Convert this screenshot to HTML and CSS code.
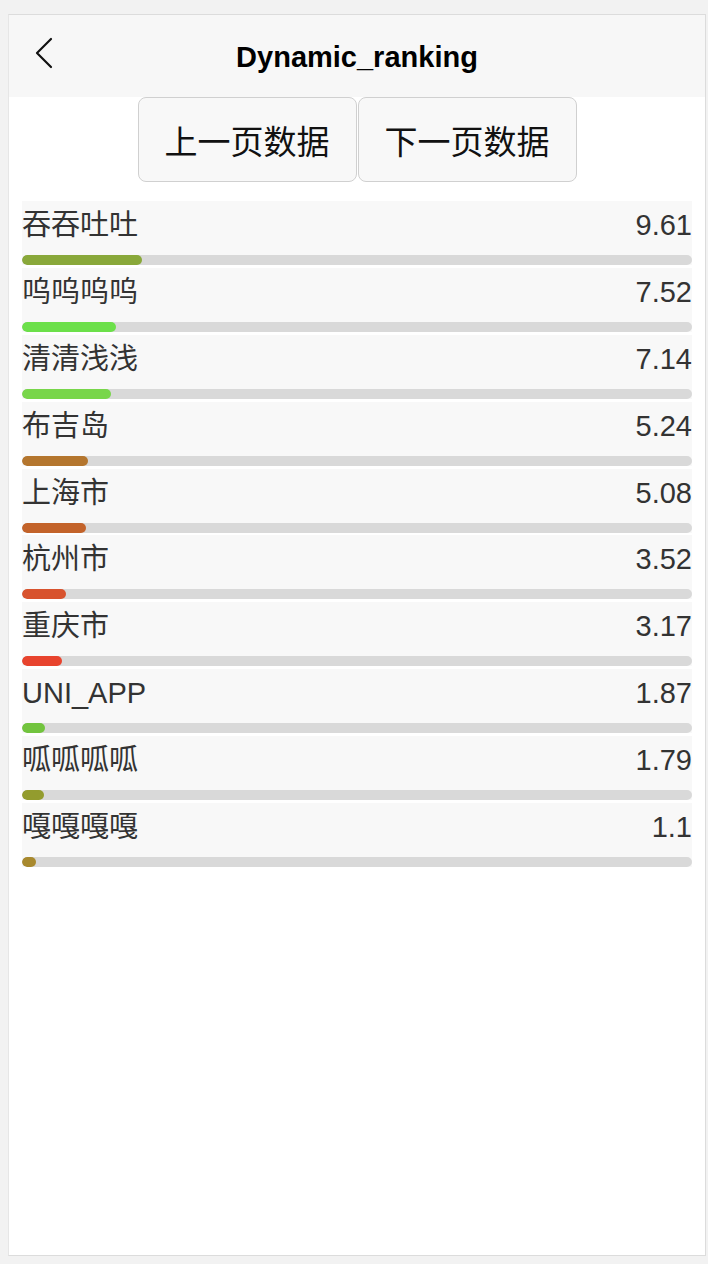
FILE: index.html
```html
<!DOCTYPE html>
<html>
<head>
    <meta charset="utf-8">
    <title>Dynamic_ranking</title>
    <link rel="stylesheet" href="styles.css">
</head>
<body>
    <div id="page">
        <div id="nav-bar">
            <div class="nav-back">
                <svg width="20" height="32" viewBox="0 0 20 32">
                    <path d="M17 2 L3 16 L17 30" fill="none" stroke="#111" stroke-width="2.2" stroke-linecap="round" stroke-linejoin="round"/>
                </svg>
            </div>
            <div class="nav-title">Dynamic_ranking</div>
            <div></div>
        </div>

        <div id="pager">
            <button class="pager-button">上一页数据</button>
            <button class="pager-button">下一页数据</button>
        </div>

        <div id="ranking-list">
            <div class="rank-item">
                <div class="rank-info"><span>吞吞吐吐</span><span>9.61</span></div>
                <div class="rank-track"><div class="rank-fill" style="width:120.1px;background:#89a83a"></div></div>
            </div>
            <div class="rank-item">
                <div class="rank-info"><span>呜呜呜呜</span><span>7.52</span></div>
                <div class="rank-track"><div class="rank-fill" style="width:94px;background:#6ce04a"></div></div>
            </div>
            <div class="rank-item">
                <div class="rank-info"><span>清清浅浅</span><span>7.14</span></div>
                <div class="rank-track"><div class="rank-fill" style="width:89.3px;background:#78d64a"></div></div>
            </div>
            <div class="rank-item">
                <div class="rank-info"><span>布吉岛</span><span>5.24</span></div>
                <div class="rank-track"><div class="rank-fill" style="width:65.5px;background:#b4762e"></div></div>
            </div>
            <div class="rank-item">
                <div class="rank-info"><span>上海市</span><span>5.08</span></div>
                <div class="rank-track"><div class="rank-fill" style="width:63.5px;background:#c3632a"></div></div>
            </div>
            <div class="rank-item">
                <div class="rank-info"><span>杭州市</span><span>3.52</span></div>
                <div class="rank-track"><div class="rank-fill" style="width:44px;background:#d8532e"></div></div>
            </div>
            <div class="rank-item">
                <div class="rank-info"><span>重庆市</span><span>3.17</span></div>
                <div class="rank-track"><div class="rank-fill" style="width:39.6px;background:#e8442e"></div></div>
            </div>
            <div class="rank-item">
                <div class="rank-info"><span>UNI_APP</span><span>1.87</span></div>
                <div class="rank-track"><div class="rank-fill" style="width:23.4px;background:#72c43e"></div></div>
            </div>
            <div class="rank-item">
                <div class="rank-info"><span>呱呱呱呱</span><span>1.79</span></div>
                <div class="rank-track"><div class="rank-fill" style="width:22.4px;background:#939c2e"></div></div>
            </div>
            <div class="rank-item">
                <div class="rank-info"><span>嘎嘎嘎嘎</span><span>1.1</span></div>
                <div class="rank-track"><div class="rank-fill" style="width:13.8px;background:#a8892e"></div></div>
            </div>
        </div>
    </div>
</body>
</html>
```

FILE: styles.css
```css
/* Ranking page */
body {
    margin: 0;
    background-color: #f2f2f2;
    font-family: 'Liberation Sans', 'Noto Sans CJK SC', sans-serif;
    color: #333333;
}

#page {
    margin: 14px 2px 0 8px;
    height: 1242px;
    box-sizing: border-box;
    border: 1px solid #dcdcdc;
    border-left-color: #e6e6e6;
    background-color: #FFFFFF;
}

/* Top navigation */
#nav-bar {
    display: grid;
    grid-template-columns: 80px 1fr 80px;
    align-items: center;
    height: 82px;
    background-color: #f7f7f7;
}

.nav-back {
    display: flex;
    align-items: center;
    padding-left: 25px;
    padding-bottom: 6px;
}

.nav-title {
    text-align: center;
    font-size: 29px;
    font-weight: bold;
    color: #000000;
    padding-top: 2px;
}

/* Prev / next buttons */
#pager {
    display: flex;
    justify-content: center;
    gap: 1px;
}

.pager-button {
    width: 219px;
    height: 85px;
    background-color: #f8f8f8;
    border: 1px solid #d0d0d0;
    border-radius: 8px;
    font-family: 'Noto Sans CJK SC', sans-serif;
    font-size: 33px;
    color: #111111;
    padding: 0;
    cursor: pointer;
}

/* Ranking rows */
#ranking-list {
    padding: 19px 13px 0 13px;
}

.rank-item {
    height: 64px;
    margin-bottom: 2.9px;
    background-color: #f8f8f8;
}

.rank-info {
    display: flex;
    justify-content: space-between;
    height: 40px;
    padding-top: 4px;
    line-height: 40px;
    font-size: 29px;
    color: #333333;
}

.rank-track {
    height: 10px;
    margin-top: 10px;
    border-radius: 5px;
    background-color: #d9d9d9;
    overflow: hidden;
}

.rank-fill {
    height: 100%;
    border-radius: 5px;
}
```
